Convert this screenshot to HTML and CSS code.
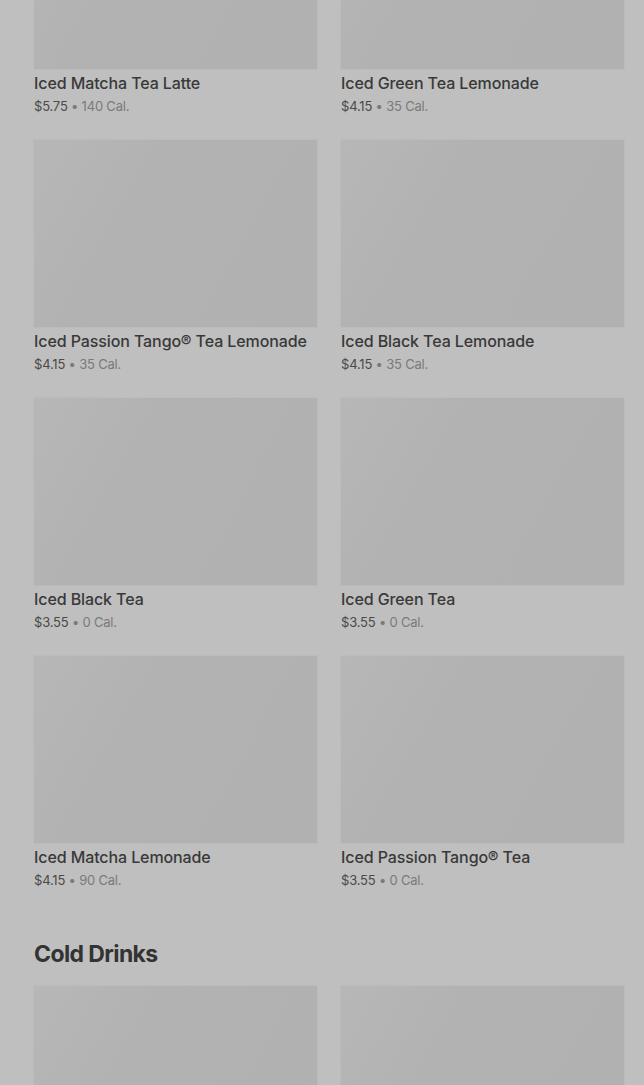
FILE: index.html
```html
<!DOCTYPE html>
<html lang="en">
<head>
    <meta charset="UTF-8">
    <meta name="viewport" content="width=device-width, initial-scale=1.0">
    <title>Menu</title>
    <link rel="stylesheet" href="styles.css">
</head>
<body>
    <main class="menu">
        <section class="category">
            <div class="grid">
                <div class="item">
                    <div class="thumb"></div>
                    <h3>Iced Matcha Tea Latte</h3>
                    <p class="meta"><span class="price">$5.75</span> • 140 Cal.</p>
                </div>
                <div class="item">
                    <div class="thumb"></div>
                    <h3>Iced Green Tea Lemonade</h3>
                    <p class="meta"><span class="price">$4.15</span> • 35 Cal.</p>
                </div>
                <div class="item">
                    <div class="thumb"></div>
                    <h3>Iced Passion Tango® Tea Lemonade</h3>
                    <p class="meta"><span class="price">$4.15</span> • 35 Cal.</p>
                </div>
                <div class="item">
                    <div class="thumb"></div>
                    <h3>Iced Black Tea Lemonade</h3>
                    <p class="meta"><span class="price">$4.15</span> • 35 Cal.</p>
                </div>
                <div class="item">
                    <div class="thumb"></div>
                    <h3>Iced Black Tea</h3>
                    <p class="meta"><span class="price">$3.55</span> • 0 Cal.</p>
                </div>
                <div class="item">
                    <div class="thumb"></div>
                    <h3>Iced Green Tea</h3>
                    <p class="meta"><span class="price">$3.55</span> • 0 Cal.</p>
                </div>
                <div class="item">
                    <div class="thumb"></div>
                    <h3>Iced Matcha Lemonade</h3>
                    <p class="meta"><span class="price">$4.15</span> • 90 Cal.</p>
                </div>
                <div class="item">
                    <div class="thumb"></div>
                    <h3>Iced Passion Tango® Tea</h3>
                    <p class="meta"><span class="price">$3.55</span> • 0 Cal.</p>
                </div>
            </div>
        </section>

        <section class="category">
            <h2>Cold Drinks</h2>
            <div class="grid">
                <div class="item">
                    <div class="thumb"></div>
                </div>
                <div class="item">
                    <div class="thumb"></div>
                </div>
            </div>
        </section>
    </main>
</body>
</html>
```

FILE: styles.css
```css
body {
    margin: 0;
    padding: 0;
    background-color: #bfbfbf;
    font-family: Inter, "Noto Sans", sans-serif;
    color: #3a3a3a;
}

.menu {
    margin-top: -118px;
    padding: 0 20px 0 34px;
}

.category + .category {
    margin-top: 51px;
}

.category h2 {
    margin: 0 0 18px;
    font-size: 23px;
    line-height: 28px;
    font-weight: 700;
    letter-spacing: -0.6px;
    color: #333;
}

.grid {
    display: grid;
    grid-template-columns: 283px 283px;
    column-gap: 24px;
    row-gap: 25px;
}

.thumb {
    height: 187px;
    background: linear-gradient(120deg, #b7b7b7 0%, #b2b2b2 35%, #b1b1b1 100%);
    box-shadow: 0 0 0 1px #bbbbbb;
}

.item h3 {
    margin: 4px 0 0;
    font-size: 16px;
    line-height: 20px;
    font-weight: 500;
    letter-spacing: -0.1px;
    color: #393939;
}

.meta {
    margin: 4px 0 0;
    font-size: 13px;
    line-height: 18px;
    letter-spacing: -0.2px;
    color: #7a7a7a;
}

.price {
    color: #4a4a4a;
}
```
